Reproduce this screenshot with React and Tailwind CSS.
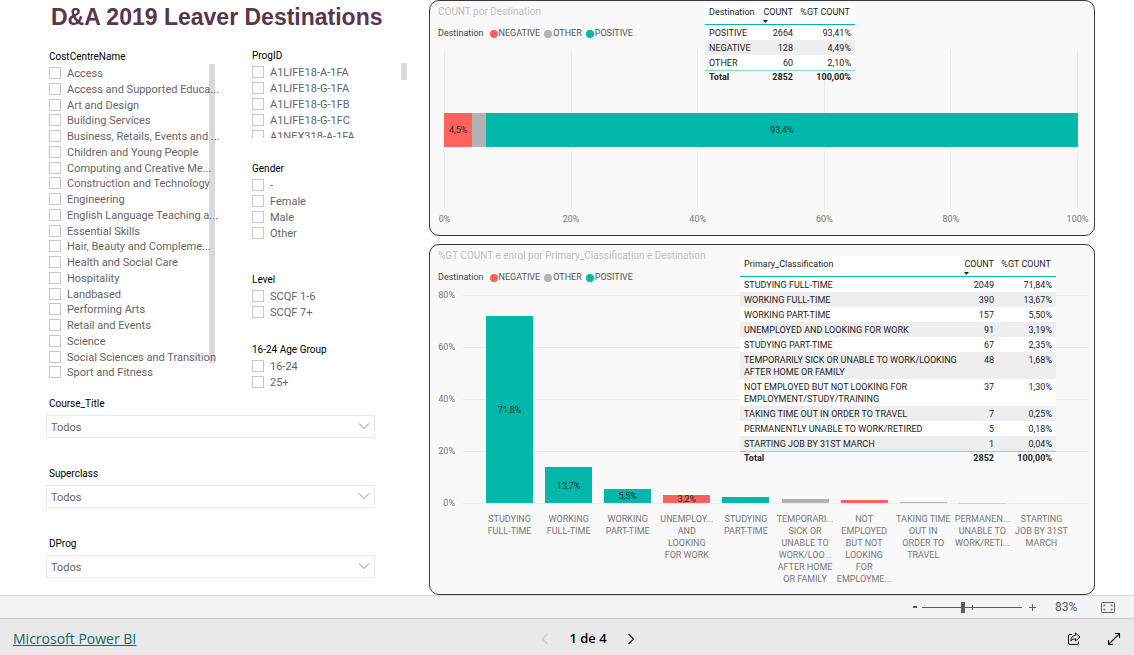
import React, { useState } from "react";

const costCentres = [
  "Access",
  "Access and Supported Educa...",
  "Art and Design",
  "Building Services",
  "Business, Retails, Events and ...",
  "Children and Young People",
  "Computing and Creative Me...",
  "Construction and Technology",
  "Engineering",
  "English Language Teaching a...",
  "Essential Skills",
  "Hair, Beauty and Compleme...",
  "Health and Social Care",
  "Hospitality",
  "Landbased",
  "Performing Arts",
  "Retail and Events",
  "Science",
  "Social Sciences and Transition",
  "Sport and Fitness",
];

const progIds = [
  "A1LIFE18-A-1FA",
  "A1LIFE18-G-1FA",
  "A1LIFE18-G-1FB",
  "A1LIFE18-G-1FC",
  "A1NEX318-A-1FA",
];

const destinationRows = [
  ["POSITIVE", "2664", "93,41%"],
  ["NEGATIVE", "128", "4,49%"],
  ["OTHER", "60", "2,10%"],
];

const classificationRows = [
  ["STUDYING FULL-TIME", "2049", "71,84%"],
  ["WORKING FULL-TIME", "390", "13,67%"],
  ["WORKING PART-TIME", "157", "5,50%"],
  ["UNEMPLOYED AND LOOKING FOR WORK", "91", "3,19%"],
  ["STUDYING PART-TIME", "67", "2,35%"],
  ["TEMPORARILY SICK OR UNABLE TO WORK/LOOKING AFTER HOME OR FAMILY", "48", "1,68%"],
  ["NOT EMPLOYED BUT NOT LOOKING FOR EMPLOYMENT/STUDY/TRAINING", "37", "1,30%"],
  ["TAKING TIME OUT IN ORDER TO TRAVEL", "7", "0,25%"],
  ["PERMANENTLY UNABLE TO WORK/RETIRED", "5", "0,18%"],
  ["STARTING JOB BY 31ST MARCH", "1", "0,04%"],
];

// Each column carries its axis label already broken into lines
const columns = [
  { value: 71.84, color: "bg-[#01b8aa]", text: "71,8%", lines: ["STUDYING", "FULL-TIME"] },
  { value: 13.67, color: "bg-[#01b8aa]", text: "13,7%", lines: ["WORKING", "FULL-TIME"] },
  { value: 5.5, color: "bg-[#01b8aa]", text: "5,5%", lines: ["WORKING", "PART-TIME"] },
  { value: 3.19, color: "bg-[#fd625e]", text: "3,2%", lines: ["UNEMPLOY...", "AND", "LOOKING", "FOR WORK"] },
  { value: 2.35, color: "bg-[#01b8aa]", lines: ["STUDYING", "PART-TIME"] },
  { value: 1.68, color: "bg-[#b3b3b3]", lines: ["TEMPORARI...", "SICK OR", "UNABLE TO", "WORK/LOO...", "AFTER HOME", "OR FAMILY"] },
  { value: 1.3, color: "bg-[#fd625e]", lines: ["NOT", "EMPLOYED", "BUT NOT", "LOOKING", "FOR", "EMPLOYME..."] },
  { value: 0.25, color: "bg-[#b3b3b3]", lines: ["TAKING TIME", "OUT IN", "ORDER TO", "TRAVEL"] },
  { value: 0.18, color: "bg-[#d0d0d0]", lines: ["PERMANEN...", "UNABLE TO", "WORK/RETI..."] },
  { value: 0.04, color: "bg-[#d5efec]", lines: ["STARTING", "JOB BY 31ST", "MARCH"] },
];

const CheckItem = ({ label }) => (
  <label className="flex h-4 min-h-0 items-center gap-1.5 whitespace-nowrap text-[11px] leading-4 text-[#666]">
    <input
      type="checkbox"
      className="h-3 w-3 shrink-0 appearance-none border border-[#c8c8c8] bg-white checked:bg-[#666]"
    />
    <span className="pt-0.5">{label}</span>
  </label>
);

const Slicer = ({ title, children }) => (
  <fieldset className="min-w-0">
    <legend className="h-[17px] text-[10px] leading-[17px] text-black">{title}</legend>
    {children}
  </fieldset>
);

const DropdownSlicer = ({ id, title }) => (
  <div>
    <label htmlFor={id} className="block h-[19px] pl-[3px] text-[10px] leading-4 text-black">
      {title}
    </label>
    <div className="relative">
      <select
        id={id}
        className="block h-[23px] w-full appearance-none border border-[#eaeaea] bg-white px-1 pt-1 text-[11px] text-[#666]"
      >
        <option>Todos</option>
      </select>
      <svg
        className="pointer-events-none absolute top-[7px] right-[5px] h-2 w-3"
        viewBox="0 0 12 8"
        fill="none"
        stroke="#8a8a8a"
        aria-hidden="true"
      >
        <path d="M1 1.5 6 6.5 11 1.5" />
      </svg>
    </div>
  </div>
);

const ChartLegend = () => (
  <div className="mt-[5px] flex h-4 items-center pt-px text-[9px] text-[#555]">
    <span className="mr-1.5 text-[#444]">Destination</span>
    <span className="mr-1 flex items-center gap-px">
      <i className="h-2 w-2 rounded-full bg-[#fd625e]"></i>NEGATIVE
    </span>
    <span className="mr-1 flex items-center gap-px">
      <i className="h-2 w-2 rounded-full bg-[#b3b3b3]"></i>OTHER
    </span>
    <span className="flex items-center gap-px">
      <i className="h-2 w-2 rounded-full bg-[#01b8aa]"></i>POSITIVE
    </span>
  </div>
);

const DataTable = ({ heading, rows, widths }) => (
  <table className="w-full table-fixed border-collapse text-[9px] leading-3 text-[#252423]">
    <colgroup>
      <col />
      <col className={widths[0]} />
      <col className={widths[1]} />
    </colgroup>
    <thead>
      <tr className="h-5 border-b border-[#01b8aa] bg-white align-top">
        <th className="px-1 pt-0.5 text-left font-normal">{heading}</th>
        <th className="relative px-1 pt-0.5 text-right font-normal" aria-sort="descending">
          COUNT
          <svg className="absolute bottom-px left-1 h-[3px] w-[5px]" viewBox="0 0 5 3" aria-hidden="true">
            <path d="M0 0H5L2.5 3Z" fill="#252423" />
          </svg>
        </th>
        <th className="pt-0.5 pr-[5px] text-right font-normal whitespace-nowrap">%GT COUNT</th>
      </tr>
    </thead>
    <tbody>
      {rows.map(([name, count, share]) => (
        <tr key={name} className="bg-white align-top even:bg-[#eee]">
          <td className="pt-0.5 pb-px pl-1">{name}</td>
          <td className="px-1 pt-0.5 pb-px text-right">{count}</td>
          <td className="px-1 pt-0.5 pb-px text-right">{share}</td>
        </tr>
      ))}
    </tbody>
    <tfoot>
      <tr className="border-t border-[#7fd9d2] font-bold">
        <td className="px-1">Total</td>
        <td className="px-1 text-right">2852</td>
        <td className="px-1 text-right">100,00%</td>
      </tr>
    </tfoot>
  </table>
);

const DestinationCard = () => (
  <section className="relative rounded-[10px] border border-[#3a3a3a] bg-[#f9f9f9] pt-[3px] pb-2 pl-2">
    <h2 className="h-4 text-[10px] leading-4 text-[#c0c0c0]">COUNT por Destination</h2>
    <ChartLegend />
    <div className="relative mt-[9px] mr-4 ml-1.5 flex h-40 items-center">
      <div className="absolute inset-0 flex justify-between">
        {[0, 20, 40, 60, 80, 100].map((t) => (
          <div key={t} className="w-px bg-[#ececec]"></div>
        ))}
      </div>
      <div className="relative flex h-[34px] w-full text-[9px] text-[#1f2b2a]">
        <div className="flex items-center justify-center bg-[#fd625e] pt-0.5" style={{ width: "4.49%" }}>
          4,5%
        </div>
        <div className="bg-[#b3b3b3]" style={{ width: "2.1%" }}></div>
        <div className="flex flex-1 items-center justify-center bg-[#01b8aa] pt-0.5">93,4%</div>
      </div>
    </div>
    <div className="mt-px mr-4 ml-1.5 flex h-4 justify-between text-[9px] leading-4 text-[#777]">
      {[0, 20, 40, 60, 80, 100].map((t) => (
        <span key={t} className="flex w-px justify-center">
          {t}%
        </span>
      ))}
    </div>
    {/* summary table floats over the plot */}
    <div className="absolute top-[3px] left-[275px] w-[150px]">
      <DataTable heading="Destination" rows={destinationRows} widths={["w-[38px]", "w-[58px]"]} />
    </div>
  </section>
);

const ClassificationCard = () => (
  <section className="relative flex-1 rounded-[10px] border border-[#3a3a3a] bg-[#f9f9f9] pt-[3px] pr-1.5 pl-2">
    <h2 className="h-4 text-[10px] leading-4 text-[#c0c0c0]">
      %GT COUNT e enrol por Primary_Classification e Destination
    </h2>
    <ChartLegend />
    <div className="mt-[10px] flex">
      <div className="flex h-[209px] w-[17px] shrink-0 flex-col justify-between text-[9px] text-[#777]">
        {[80, 60, 40, 20, 0].map((t) => (
          <span key={t} className="flex h-px items-center justify-end">
            {t}%
          </span>
        ))}
      </div>
      <div className="ml-2 min-w-0 flex-1">
        <div className="relative h-[209px]">
          <div className="absolute inset-0 flex flex-col justify-between">
            {[80, 60, 40, 20, 0].map((t) => (
              <div key={t} className="h-px bg-[#ececec]"></div>
            ))}
          </div>
          <div className="relative grid h-52 grid-cols-10 items-end px-[17px]">
            {columns.map((c) => (
              <div
                key={c.lines.join(" ")}
                className={`mx-auto flex w-[47px] items-center justify-center text-[9px] leading-none text-[#1f2b2a] ${c.color}`}
                style={{ height: `${(c.value / 80) * 100}%` }}
              >
                {c.text && <span className="pt-0.5">{c.text}</span>}
              </div>
            ))}
          </div>
        </div>
        <div className="mt-[9px] grid grid-cols-10 px-[17px] text-center text-[9px] leading-3 text-[#777]">
          {columns.map((c) => (
            <div key={c.lines.join(" ")} className="flex flex-col items-center whitespace-nowrap">
              {c.lines.map((line) => (
                <span key={line}>{line}</span>
              ))}
            </div>
          ))}
        </div>
      </div>
    </div>
    <div className="absolute top-[11px] left-[310px] w-[316px]">
      <DataTable
        heading="Primary_Classification"
        rows={classificationRows}
        widths={["w-[38px]", "w-[58px]"]}
      />
    </div>
  </section>
);

const ZoomBar = () => {
  const [zoom, setZoom] = useState(41);

  return (
    <div className="flex h-[23px] items-center justify-end border-t border-[#dcdcdc] bg-[#f4f4f4] pr-[19px] text-[#605e5c]">
      <button
        aria-label="Zoom out"
        onClick={() => setZoom(Math.max(0, zoom - 5))}
        className="flex h-4 w-[14px] items-center justify-center"
      >
        <span className="h-0.5 w-1 bg-[#605e5c]"></span>
      </button>
      <div className="relative flex h-4 w-[100px] items-center">
        <input
          type="range"
          aria-label="Zoom"
          min="0"
          max="100"
          value={zoom}
          onChange={(e) => setZoom(Number(e.target.value))}
          className="h-4 w-full appearance-none bg-transparent [&::-webkit-slider-runnable-track]:h-px [&::-webkit-slider-runnable-track]:bg-[#605e5c] [&::-webkit-slider-thumb]:-mt-[5px] [&::-webkit-slider-thumb]:h-[11px] [&::-webkit-slider-thumb]:w-1 [&::-webkit-slider-thumb]:appearance-none [&::-webkit-slider-thumb]:bg-[#605e5c]"
        />
        <span className="pointer-events-none absolute top-1.5 left-[50px] h-[5px] w-px bg-[#605e5c]"></span>
      </div>
      <button
        aria-label="Zoom in"
        onClick={() => setZoom(Math.min(100, zoom + 5))}
        className="flex h-4 w-5 items-center justify-center"
      >
        <svg className="h-[7px] w-[7px]" viewBox="0 0 7 7" stroke="#605e5c" aria-hidden="true">
          <path d="M3.5 0V7M0 3.5H7" />
        </svg>
      </button>
      <span className="ml-[13px] w-[46px] text-xs">83%</span>
      <button aria-label="Fit to page">
        <svg className="h-[11px] w-[14px]" viewBox="0 0 14 11" fill="none" stroke="#605e5c" aria-hidden="true">
          <rect x=".5" y=".5" width="13" height="10" rx="1" />
          <path d="M3 4.5V3H4.5M9.5 3H11V4.5M11 6.5V8H9.5M4.5 8H3V6.5" />
        </svg>
      </button>
    </div>
  );
};

const Footer = () => (
  <footer className="grid h-[37px] grid-cols-3 items-center border-t border-[#c4c4c4] bg-[#e9e9e9] px-[13px] pt-[3px] font-['Open_Sans','Noto_Sans',sans-serif]">
    <a href="https://powerbi.microsoft.com" className="justify-self-start text-sm font-medium text-[#116b62] underline">
      Microsoft Power BI
    </a>
    <div className="flex items-center justify-center gap-5 pl-[42px]">
      <button aria-label="Previous page" disabled>
        <svg className="h-3 w-2" viewBox="0 0 8 12" fill="none" stroke="#b5b5b5" aria-hidden="true">
          <path d="M6.5 1 1.5 6 6.5 11" />
        </svg>
      </button>
      <span className="text-[13px] font-semibold text-black">1 de 4</span>
      <button aria-label="Next page">
        <svg className="h-3 w-2" viewBox="0 0 8 12" fill="none" stroke="#222" strokeWidth="1.2" aria-hidden="true">
          <path d="M1.5 1 6.5 6 1.5 11" />
        </svg>
      </button>
    </div>
    <div className="flex items-center gap-[26px] justify-self-end">
      <button aria-label="Share">
        <svg className="h-[14px] w-[14px]" viewBox="0 0 14 14" fill="none" stroke="#111" strokeLinejoin="round" aria-hidden="true">
          <path d="M5 2.5H3A1.5 1.5 0 0 0 1.5 4V11A1.5 1.5 0 0 0 3 12.5H10A1.5 1.5 0 0 0 11.5 11V9.5" />
          <path d="M8.5 1 13 5 8.5 9V6.8C6.5 6.8 5 7.5 4 9 4 5.5 5.5 3.5 8.5 3.2Z" />
        </svg>
      </button>
      <button aria-label="Full screen">
        <svg className="h-[14px] w-[14px]" viewBox="0 0 14 14" fill="none" stroke="#111" strokeWidth="1.1" aria-hidden="true">
          <path d="M1.5 12.5 12.5 1.5M8 1.5H12.5V6M1.5 8V12.5H6" />
        </svg>
      </button>
    </div>
  </footer>
);

const App = () => {
  return (
    <div className="flex min-h-screen flex-col bg-white font-['Roboto','Open_Sans',sans-serif]">
      <main className="flex flex-1">
        {/* Filters */}
        <aside className="w-[429px] shrink-0 pr-[54px] pl-[46px]">
          <h1 className="h-[47px] pl-[5px] font-['Liberation_Sans',Arial,sans-serif] text-[23px] leading-[34px] font-bold whitespace-nowrap text-[#58364f]">
            D&amp;A 2019 Leaver Destinations
          </h1>

          <div className="flex">
            <div className="relative w-[203px] shrink-0 pt-px pl-[3px]">
              <div className="absolute top-[17px] left-[163px] h-[299px] w-1.5 bg-[#d9d9d9]"></div>
              <div className="relative">
                <Slicer title="CostCentreName">
                  <div className="grid h-[315px] auto-rows-fr">
                    {costCentres.map((name) => (
                      <CheckItem key={name} label={name} />
                    ))}
                  </div>
                </Slicer>
              </div>
            </div>

            <div className="relative flex-1 pl-[3px]">
              <div className="absolute top-4 left-[152px] h-[17px] w-1.5 bg-[#d9d9d9]"></div>
              <Slicer title="ProgID">
                <div className="h-[74px] overflow-hidden">
                  {progIds.map((id) => (
                    <CheckItem key={id} label={id} />
                  ))}
                </div>
              </Slicer>
              <div className="mt-[22px]">
                <Slicer title="Gender">
                  {["-", "Female", "Male", "Other"].map((g) => (
                    <CheckItem key={g} label={g} />
                  ))}
                </Slicer>
              </div>
              <div className="mt-[30px]">
                <Slicer title="Level">
                  <CheckItem label="SCQF 1-6" />
                  <CheckItem label="SCQF 7+" />
                </Slicer>
              </div>
              <div className="mt-[21px]">
                <Slicer title="16-24 Age Group">
                  <CheckItem label="16-24" />
                  <CheckItem label="25+" />
                </Slicer>
              </div>
            </div>
          </div>

          <div className="mt-1.5 flex flex-col gap-7">
            <DropdownSlicer id="course-title" title="Course_Title" />
            <DropdownSlicer id="superclass" title="Superclass" />
            <DropdownSlicer id="dprog" title="DProg" />
          </div>
        </aside>

        {/* Charts */}
        <div className="mr-[39px] flex min-w-0 flex-1 flex-col gap-2">
          <DestinationCard />
          <ClassificationCard />
        </div>
      </main>

      <ZoomBar />
      <Footer />
    </div>
  );
};

export default App;
